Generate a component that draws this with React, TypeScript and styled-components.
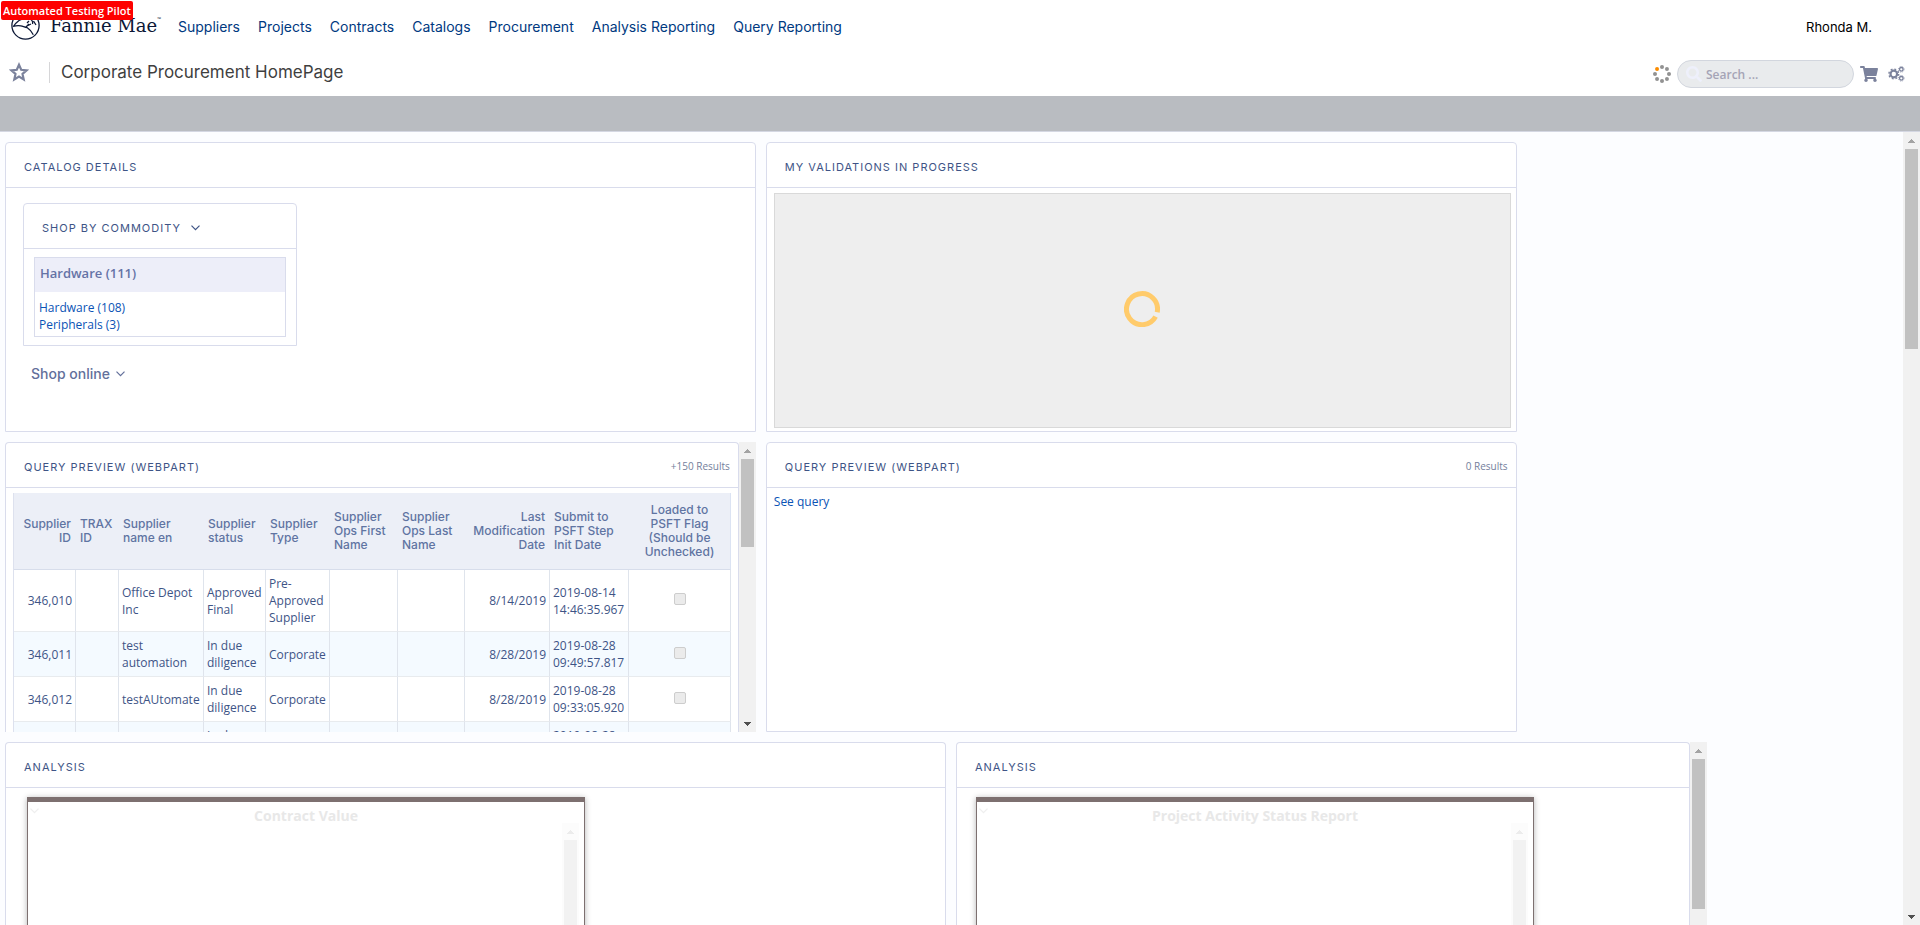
import React from 'react';
import styled, { createGlobalStyle } from 'styled-components';
import { FaShoppingCart, FaSearch } from 'react-icons/fa';

const display = '"Inter", "Open Sans", sans-serif';
const body = '"Open Sans", "Noto Sans", sans-serif';
const line = '#d9dcec';

const GlobalStyle = createGlobalStyle`
  * { box-sizing: border-box; }
  body { margin: 0; background: #fcfdff; font: 12px/17px ${body}; color: #3e5486; overflow: hidden; }
  a { text-decoration: none; }
  h1, h2, h3 { margin: 0; font-weight: 400; }
  button { font: inherit; color: inherit; background: none; border: 0; padding: 0; }
`;

const Page = styled.div`
  display: flex;
  flex-direction: column;
  height: 100vh;
`;
const Badge = styled.div`
  position: absolute;
  top: 1px;
  left: 1px;
  padding: 0 2px;
  background: #fe0000;
  border-radius: 2px;
  color: #fff;
  font: 600 11px/19px ${body};
`;
const TopBar = styled.header`
  display: flex;
  align-items: center;
  height: 54px;
  padding: 0 48px 0 11px;
  background: #fff;
`;
const Brand = styled.a`
  display: flex;
  align-items: center;
  width: 167px;
  padding-bottom: 4px;
  gap: 10px;
  color: #0b1735;
`;
const BrandName = styled.span`
  display: flex;
  padding-top: 2px;
  font: 18px/24px "DejaVu Serif", "Liberation Serif", serif;
`;
const Trade = styled.sup`
  font: 5px/10px ${body};
`;
const Nav = styled.nav`
  display: flex;
  flex: 1;
  gap: 18px;
`;
const NavLink = styled.a`
  font: 400 14px/20px ${display};
  color: #00397f;
`;
const User = styled.span`
  font: 400 13px/20px ${display};
  color: #000;
`;
const TitleBar = styled.div`
  display: flex;
  align-items: center;
  height: 42px;
  padding: 0 15px 6px 9px;
  background: #fff;
`;
const IconButton = styled.button`
  display: flex;
  color: #7b829c;
  font-size: 18px;
`;
const Title = styled.h1`
  flex: 1;
  margin-left: 20px;
  padding-left: 11px;
  border-left: 1px solid #d6d6d8;
  font: 400 17px/21px ${display};
  color: #3f3f3f;
`;
const Tools = styled.div`
  display: flex;
  align-items: center;
  gap: 6px;
  padding-top: 4px;
`;
const Actions = styled.div`
  display: flex;
  align-items: center;
  gap: 10px;
`;
const Search = styled.label`
  display: flex;
  align-items: center;
  gap: 4px;
  width: 177px;
  height: 28px;
  padding: 0 8px;
  border: 1px solid #d2d6de;
  border-radius: 14px;
  background: #e9ebed;
  color: #eef0fb;
  font-size: 16px;
`;
const SearchInput = styled.input`
  flex: 1;
  min-width: 0;
  border: 0;
  padding: 0;
  background: none;
  font: 600 12px/17px ${body};
  outline: 0;
  &::placeholder { color: #a5a4b6; opacity: 1; }
`;
const Band = styled.div`
  height: 36px;
  flex: none;
  background: #b9bcc1;
  border-bottom: 1px solid #d4d7e2;
`;
const Main = styled.main`
  display: flex;
  flex: 1;
  min-height: 0;
  overflow: hidden;
`;
const Board = styled.div`
  flex: 1;
  min-width: 0;
  display: grid;
  grid-template-columns: repeat(10, minmax(0, 1fr));
  grid-auto-rows: 290px;
  align-content: start;
  gap: 10px;
  padding: 10px 6px 0 5px;
`;
const Cell = styled.div<{ $span: number; $start?: boolean }>`
  display: flex;
  min-width: 0;
  overflow: hidden;
  grid-column: ${p => (p.$start ? '1 /' : 'auto /')} span ${p => p.$span};
`;
const Panel = styled.section<{ $open?: boolean }>`
  flex: 1;
  min-width: 0;
  display: flex;
  flex-direction: column;
  background: #fff;
  border: 1px solid ${line};
  border-bottom-width: ${p => (p.$open ? 0 : 1)}px;
  border-radius: 4px 4px 0 0;
`;
const PanelHead = styled.div`
  display: flex;
  flex: none;
  align-items: center;
  height: 45px;
  padding: 3px 8px 0 18px;
  border-bottom: 1px solid ${line};
`;
const PanelTitle = styled.h2`
  font: 400 11px/16px ${display};
  letter-spacing: 1px;
  text-transform: uppercase;
`;
const Count = styled.span`
  margin-left: auto;
  font-size: 10px;
  color: #74809c;
`;
const PanelBody = styled.div<{ $pad: string }>`
  flex: 1;
  min-height: 0;
  padding: ${p => p.$pad};
`;
const ShopBox = styled.section`
  width: 274px;
  border: 1px solid ${line};
  border-radius: 4px 4px 0 0;
`;
const Toggle = styled.button`
  display: flex;
  align-items: center;
  gap: 10px;
`;
const OnlineToggle = styled(Toggle)`
  gap: 6px;
  margin: 18px 0 0 8px;
  font: 500 14px/20px ${display};
  color: #63709b;
`;
const Group = styled.div`
  margin: 8px 10px;
  border: 1px solid ${line};
`;
const GroupHead = styled.h3`
  height: 34px;
  padding: 0 5px;
  background: #edeef9;
  font: 600 13px/31px ${body};
  color: #6573a6;
`;
const GroupLinks = styled.div`
  display: flex;
  flex-direction: column;
  align-items: flex-start;
  padding: 7px 4px 3px;
`;
const Link = styled.a`
  color: #0a53b5;
`;
const Loading = styled.div`
  display: flex;
  align-items: center;
  justify-content: center;
  height: 100%;
  padding-bottom: 3px;
  background: #eee;
  border: 1px solid #d9d9d9;
`;
const Table = styled.table`
  width: 100%;
  table-layout: fixed;
  border-collapse: separate;
  border-spacing: 0;
  border-left: 1px solid #dde1ee;
`;
const Th = styled.th<{ $align?: string }>`
  height: 77px;
  padding: 0 5px 0 4px;
  background: #eceff7;
  border-bottom: 1px solid #d7ddeb;
  font: 500 12px/14px ${display};
  color: #6074a2;
  text-align: ${p => p.$align || 'left'};
  &:last-child { padding: 0 12px; border-right: 1px solid #dbe3f3; }
`;
const Tr = styled.tr`
  &:nth-child(even) { background: #f4faff; }
`;
const Td = styled.td<{ $align?: string }>`
  padding: 5px 3px;
  border-right: 1px solid #dfe4ec;
  border-bottom: 1px solid #e8ebee;
  text-align: ${p => p.$align || 'left'};
`;
const Check = styled.input`
  appearance: none;
  display: block;
  width: 12px;
  height: 12px;
  margin: 0 auto 3px;
  border: 1px solid #cdcdcd;
  border-radius: 2px;
  background: #ebebeb;
`;
const Report = styled.article`
  display: flex;
  flex-direction: column;
  width: 558px;
  height: 260px;
  border: 1px solid #7d7070;
  border-top-width: 5px;
  box-shadow: 0 1px 6px rgba(0, 0, 0, 0.3);
`;
const ReportTitle = styled.h3`
  display: grid;
  grid-template-columns: 12px 1fr 12px;
  height: 21px;
  font: 700 14px/27px ${body};
  text-align: center;
  color: #e8e8e8;
  svg { margin: 6px 0 0 2px; opacity: 0.7; }
`;
const ReportBody = styled.div`
  display: flex;
  flex: 1;
  justify-content: flex-end;
  padding-right: 5px;
`;
const Bar = styled.div<{ $faint?: boolean }>`
  display: flex;
  flex: none;
  flex-direction: column;
  justify-content: space-between;
  width: 17px;
  background: #f1f1f1;
  opacity: ${p => (p.$faint ? 0.2 : 1)};
`;
const BarButton = styled.button`
  display: flex;
  align-items: center;
  justify-content: center;
  width: 17px;
  height: 17px;
`;
const Thumb = styled.div<{ $length: number }>`
  height: ${p => p.$length}px;
  margin: 0 2px;
  background: #c1c1c1;
`;

function Scrollbar({ length, faint, name }: { length: number; faint?: boolean; name: string }) {
  return (
    <Bar $faint={faint}>
      <div>
        <BarButton aria-label={`Scroll ${name} up`}>
          <svg width="7" height="4" viewBox="0 0 7 4" fill="#a3a3a3"><path d="M3 0h1v1h1v1h1v1h1v1H0V3h1V2h1V1h1z" /></svg>
        </BarButton>
        <Thumb $length={length} />
      </div>
      <BarButton aria-label={`Scroll ${name} down`}>
        <svg width="7" height="4" viewBox="0 0 7 4" fill="#505050"><path d="M0 0h7v1H6v1H5v1H4v1H3V3H2V2H1V1H0z" /></svg>
      </BarButton>
    </Bar>
  );
}

const Chevron = () => (
  <svg width="9" height="6" viewBox="0 0 9 6" fill="none" stroke="currentColor" strokeWidth="1.2"><path d="M.5.7l4 4 4-4" /></svg>
);

const Emblem = () => (
  <svg width="29" height="29" viewBox="0 0 29 29" fill="none" stroke="#0b1735" strokeWidth="1.3">
    <circle cx="14.5" cy="14.5" r="13.600" />
    <path d="M2 15.500C5 14.500 7 14.200 9.700 14.800S14 16.500 16 16.500C18.500 18 20.500 20.500 22.300 23.800M2.300 15.500C4 13 6 11 8 9.500M8 9.500l7-3M16 12l2-2M17 14.500l3-1.500M19 8c2 1 3 3 2.500 5M22.500 10l2.500 4M15 16l3-3" />
  </svg>
);

const Star = () => (
  <svg width="20" height="20" viewBox="0 0 20 20" fill="none" stroke="currentColor" strokeWidth="2.2">
    <path d="M10 2.800l2.200 5 5.300.6-4 3.600 1.200 5.400L10 14.600l-4.700 2.800L6.500 12l-4-3.600 5.300-.6z" />
  </svg>
);

const Gears = () => (
  <svg width="17" height="16" viewBox="0 0 17 16" fill="none" stroke="currentColor">
    <circle cx="5.800" cy="8" r="3.300" strokeWidth="2.200" />
    <circle cx="5.800" cy="8" r="4.900" strokeWidth="1.400" strokeDasharray="1.920 1.920" />
    <circle cx="13.300" cy="3.300" r="1.800" strokeWidth="1.300" />
    <circle cx="13.300" cy="3.300" r="2.800" strokeWidth=".8" strokeDasharray="1.100 1.100" />
    <circle cx="13.300" cy="12.300" r="1.800" strokeWidth="1.300" />
    <circle cx="13.300" cy="12.300" r="2.800" strokeWidth=".8" strokeDasharray="1.100 1.100" />
  </svg>
);

const dots = Array.from({ length: 8 }, (_, i) => {
  const a = (i * Math.PI) / 4;
  return { x: 9 + 7 * Math.sin(a), y: 9 - 7 * Math.cos(a), hot: i === 7 };
});
const Spinner = () => (
  <svg width="18" height="18" viewBox="0 0 18 18">
    {dots.map((d, i) => <circle key={i} cx={d.x} cy={d.y} r="2" fill={d.hot ? '#fb8c00' : '#929292'} />)}
  </svg>
);
const Ring = () => (
  <svg width="36" height="36" viewBox="0 0 36 36" fill="none" stroke="#ffcb6b" strokeWidth="5">
    <path d="M33.200 21.200A15.500 15.500 0 1 0 31.600 25.600" />
  </svg>
);

const menu = ['Suppliers', 'Projects', 'Contracts', 'Catalogs', 'Procurement', 'Analysis Reporting', 'Query Reporting'];

const columns: { label: string; width: number; align?: string }[] = [
  { label: 'Supplier ID', width: 62, align: 'right' },
  { label: 'TRAX ID', width: 43 },
  { label: 'Supplier name en', width: 85 },
  { label: 'Supplier status', width: 62 },
  { label: 'Supplier Type', width: 64 },
  { label: 'Supplier Ops First Name', width: 68 },
  { label: 'Supplier Ops Last Name', width: 67 },
  { label: 'Last Modification Date', width: 85, align: 'right' },
  { label: 'Submit to PSFT Step Init Date', width: 79 },
  { label: 'Loaded to PSFT Flag (Should be Unchecked)', width: 102, align: 'center' },
];
const rows = [
  ['346,010', '', 'Office Depot Inc', 'Approved Final', 'Pre-Approved Supplier', '', '', '8/14/2019', '2019-08-14 14:46:35.967'],
  ['346,011', '', 'test automation', 'In due diligence', 'Corporate', '', '', '8/28/2019', '2019-08-28 09:49:57.817'],
  ['346,012', '', 'testAUtomate', 'In due diligence', 'Corporate', '', '', '8/28/2019', '2019-08-28 09:33:05.920'],
  ['', '', '', 'In due diligence', '', '', '', '', '2019-08-28 09:21:44.310'],
];

function ReportCard({ title }: { title: string }) {
  return (
    <Report>
      <ReportTitle><Chevron /><span>{title}</span></ReportTitle>
      <ReportBody><Scrollbar length={160} faint name={title} /></ReportBody>
    </Report>
  );
}

export default function App() {
  return (
    <Page>
      <GlobalStyle />
      <TopBar>
        <Brand href="#" aria-label="Fannie Mae home">
          <Emblem />
          <BrandName>Fannie Mae<Trade>™</Trade></BrandName>
        </Brand>
        <Nav>{menu.map(m => <NavLink key={m} href="#">{m}</NavLink>)}</Nav>
        <User>Rhonda M.</User>
      </TopBar>
      <Badge>Automated Testing Pilot</Badge>
      <TitleBar>
        <IconButton aria-label="Add to favorites"><Star /></IconButton>
        <Title>Corporate Procurement HomePage</Title>
        <Tools>
          <Spinner />
          <Search>
            <FaSearch />
            <SearchInput aria-label="Search" placeholder="Search ..." />
          </Search>
          <Actions>
            <IconButton aria-label="Cart"><FaShoppingCart /></IconButton>
            <IconButton aria-label="Settings"><Gears /></IconButton>
          </Actions>
        </Tools>
      </TitleBar>
      <Band />
      <Main>
        <Board>
          <Cell $span={4} $start>
            <Panel>
              <PanelHead><PanelTitle>Catalog Details</PanelTitle></PanelHead>
              <PanelBody $pad="15px 17px">
                <ShopBox>
                  <PanelHead>
                    <Toggle><PanelTitle>Shop by Commodity</PanelTitle><Chevron /></Toggle>
                  </PanelHead>
                  <Group>
                    <GroupHead>Hardware (111)</GroupHead>
                    <GroupLinks>
                      <Link href="#">Hardware (108)</Link>
                      <Link href="#">Peripherals (3)</Link>
                    </GroupLinks>
                  </Group>
                </ShopBox>
                <OnlineToggle>Shop online<Chevron /></OnlineToggle>
              </PanelBody>
            </Panel>
          </Cell>
          <Cell $span={4}>
            <Panel>
              <PanelHead><PanelTitle>My Validations in Progress</PanelTitle></PanelHead>
              <PanelBody $pad="5px 5px 3px 7px"><Loading><Ring /></Loading></PanelBody>
            </Panel>
          </Cell>
          <Cell $span={4} $start>
            <Panel $open>
              <PanelHead><PanelTitle>Query Preview (Webpart)</PanelTitle><Count>+150 Results</Count></PanelHead>
              <PanelBody $pad="5px 7px 0">
                <Table>
                  <colgroup>{columns.map(c => <col key={c.label} width={c.width} />)}</colgroup>
                  <thead>
                    <tr>{columns.map(c => <Th key={c.label} $align={c.align}>{c.label}</Th>)}</tr>
                  </thead>
                  <tbody>
                    {rows.map((r, n) => (
                      <Tr key={n}>
                        {r.map((v, i) => <Td key={i} $align={columns[i].align}>{v}</Td>)}
                        <Td><Check type="checkbox" aria-label={`Loaded flag, row ${n + 1}`} /></Td>
                      </Tr>
                    ))}
                  </tbody>
                </Table>
              </PanelBody>
            </Panel>
            <Scrollbar length={88} name="query preview" />
          </Cell>
          <Cell $span={4}>
            <Panel>
              <PanelHead><PanelTitle>Query Preview (Webpart)</PanelTitle><Count>0 Results</Count></PanelHead>
              <PanelBody $pad="5px 7px"><Link href="#">See query</Link></PanelBody>
            </Panel>
          </Cell>
          <Cell $span={5} $start>
            <Panel $open>
              <PanelHead><PanelTitle>Analysis</PanelTitle></PanelHead>
              <PanelBody $pad="9px 21px 0"><ReportCard title="Contract Value" /></PanelBody>
            </Panel>
          </Cell>
          <Cell $span={4}>
            <Panel $open>
              <PanelHead><PanelTitle>Analysis</PanelTitle></PanelHead>
              <PanelBody $pad="9px 19px 0"><ReportCard title="Project Activity Status Report" /></PanelBody>
            </Panel>
            <Scrollbar length={150} name="analysis" />
          </Cell>
        </Board>
        <Scrollbar length={200} name="page" />
      </Main>
    </Page>
  );
}
